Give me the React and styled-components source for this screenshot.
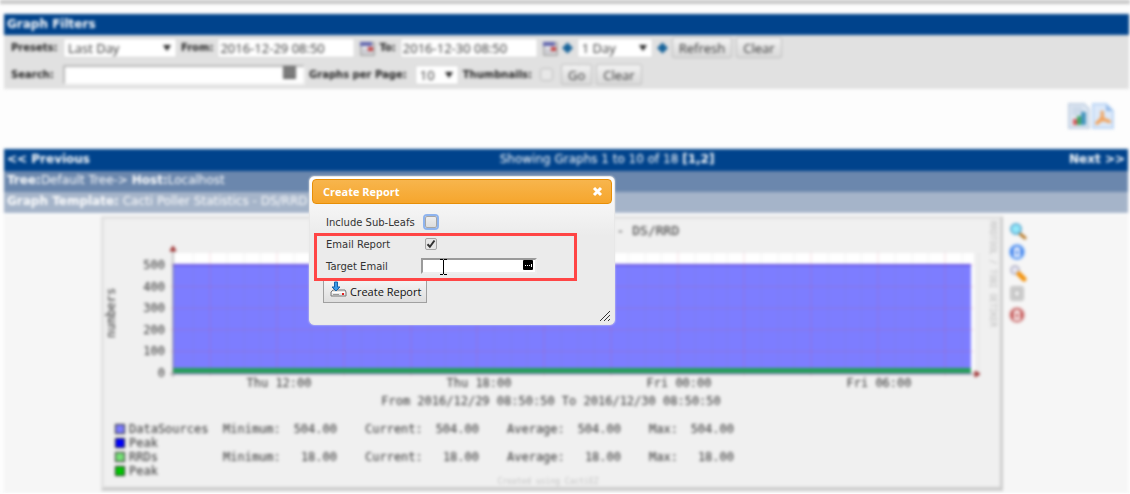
import React from "react";
import styled, { createGlobalStyle, css } from "styled-components";

const GlobalStyle = createGlobalStyle`
  * {
    box-sizing: border-box;
  }

  body {
    margin: 0;
    background: #fdfdfd;
    font-family: "DejaVu Sans", sans-serif;
    overflow: hidden;
  }
`;

const Screen = styled.div`
  position: relative;
`;

const Page = styled.main`
  filter: blur(1px) blur(1px);
  border-top: 4px solid #c5c5c5;
`;

const Filters = styled.section`
  margin: 10px 1px 0 4px;
  background: #e1e1e1;
`;

const FiltersTitle = styled.h2`
  margin: 0;
  padding: 0 3px;
  height: 21px;
  line-height: 21px;
  background: #00438c;
  color: #fff;
  font-size: 12px;
`;

const FilterForm = styled.form`
  display: flex;
  flex-direction: column;
  gap: 6px;
  padding: 2px 7px 4px;
`;

const FilterRow = styled.div`
  display: flex;
  align-items: center;
  height: 21px;
  gap: 4px;
`;

const FilterLabel = styled.label`
  display: flex;
  align-items: center;
  gap: ${({ $gap }) => $gap || 4}px;
  font-size: 10px;
  font-weight: 700;
  white-space: nowrap;
  color: #222;

  > span:first-child {
    min-width: ${({ $wide }) => ($wide ? "48px" : "0")};
  }
`;

const field = css`
  height: 20px;
  padding: 0 2px;
  border: 1px solid #d2d2d2;
  border-radius: 2px;
  background: #fff;
  color: #333;
  font-family: "Open Sans", sans-serif;
  font-size: 13px;
`;

const Field = styled.input`
  ${field}
  width: ${({ $width }) => $width}px;
`;

const SearchField = styled(Field)`
  border: 2px solid #b8b8b8;
  border-right-color: #f2f2f2;
  border-bottom-color: #f2f2f2;
`;

const SearchBox = styled.span`
  display: flex;
  position: relative;

  svg {
    position: absolute;
    top: 0;
    right: 8px;
  }
`;

const SelectBox = styled.span`
  display: flex;
  position: relative;

  &::after {
    content: "";
    position: absolute;
    top: 7px;
    right: 6px;
    border: 4px solid transparent;
    border-top: 6px solid #222;
    border-bottom: 0;
  }
`;

const Select = styled.select`
  ${field}
  appearance: none;
  padding-left: 4px;
  width: ${({ $width }) => $width}px;
`;

const Button = styled.button`
  height: 21px;
  padding: 0 6px;
  border: 1px solid #bdbdbd;
  border-radius: 2px;
  background: linear-gradient(#f2f2f2, #dadada);
  color: #333;
  font-family: "Open Sans", sans-serif;
  font-size: 13px;
  line-height: 18px;
`;

const Thumbnails = styled.input`
  appearance: none;
  width: 13px;
  height: 13px;
  margin: 0 4px;
  border: 1px solid #bcbcbc;
  border-radius: 3px;
  background: #e8e8e8;
`;

const Exports = styled.div`
  display: flex;
  justify-content: flex-end;
  gap: 2px;
  padding: 14px 16px 20px;
`;

const Graphs = styled.section`
  margin: 0 2px 0 4px;
  background: #f6f6f6;
`;

const Pager = styled.nav`
  display: grid;
  grid-template-columns: 6fr auto 5fr;
  height: 22px;
  padding: 0 3px;
  background: #00438c;
  color: #fff;
  font-size: 12px;
  line-height: 21px;

  a {
    color: inherit;
    font-weight: 700;
    text-decoration: none;
  }

  > :last-child {
    text-align: right;
  }
`;

const Crumb = styled.div`
  height: 21px;
  padding: 0 3px;
  background: ${({ $light }) => ($light ? "#a5b4c9" : "#6b87ad")};
  color: #fff;
  font-size: 12px;
  line-height: 19px;
`;

const GraphRow = styled.div`
  display: flex;
  align-items: flex-start;
  justify-content: center;
  gap: 6px;
  padding: 1px 4px 2px 0;
  border-top: 2px solid #fff;
`;

const Graph = styled.figure`
  width: 80%;
  min-width: 902px;
  margin: 0;
  border: 3px solid #e1e1e1;
  border-right-color: #cdcdcd;
  border-bottom: 4px solid #cdcdcd;
  background: #f0f0f0;
  font-family: "DejaVu Sans Mono", monospace;
  font-size: 12px;
  color: #333;

  svg {
    display: block;
  }
`;

const Legend = styled.table`
  margin-left: 11px;
  border-collapse: collapse;
  line-height: 14px;

  th,
  td {
    padding: 0;
    font-weight: 400;
    text-align: left;
    white-space: nowrap;
  }
`;

const NameCell = styled.th`
  width: 108px;
`;

const StatCell = styled.td`
  width: ${({ $narrow }) => ($narrow ? 35 : 64)}px;
`;

const ValueCell = styled.td`
  width: 78px;

  && {
    text-align: right;
    padding-right: 28px;
  }
`;

const Swatch = styled.span`
  display: inline-block;
  width: 10px;
  height: 10px;
  margin-right: 4px;
  border: 1px solid #222;
  background: ${({ $color }) => $color};
  vertical-align: -1px;
`;

const Credit = styled.figcaption`
  height: 9px;
  padding-right: 8px;
  color: #c4c4c4;
  font-size: 8px;
  line-height: 8px;
  text-align: center;
`;

const Tools = styled.div`
  display: flex;
  flex-direction: column;
  gap: 3px;
  padding-top: 6px;

  svg {
    display: block;
  }
`;

const Dialog = styled.section`
  position: absolute;
  top: 176px;
  left: 309px;
  width: 306px;
  height: 149px;
  padding: 2px;
  border: 1px solid #e8e8e8;
  border-radius: 5px;
  background: linear-gradient(#fff, #ebebeb 40%);
  box-shadow: 0 0 2px #e8e8e8;
`;

const DialogHeader = styled.header`
  display: flex;
  align-items: center;
  justify-content: space-between;
  height: 25px;
  padding: 0 8px 0 10px;
  border: 1px solid #e78f08;
  border-radius: 4px;
  background: linear-gradient(#f7b54d, #f6a62d);
  color: #fff;
`;

const DialogTitle = styled.h1`
  margin: 0;
  font-family: "Open Sans", sans-serif;
  font-size: 11px;
  font-weight: 700;
`;

const CloseButton = styled.button`
  display: flex;
  padding: 0;
  border: 0;
  background: none;
`;

const ReportForm = styled.form`
  padding: 7px 11px 0;
`;

const FormRow = styled.div`
  display: grid;
  grid-template-columns: 95px auto;
  align-items: center;
  justify-content: start;
  height: 22px;
  padding-left: 3px;
  color: #333;
  font-size: 10px;
`;

const Highlighted = styled.div`
  position: relative;

  &::after {
    content: "";
    position: absolute;
    z-index: 1;
    top: 0;
    left: -9px;
    width: 257px;
    height: 42px;
    border: 3px solid #ff4545;
    pointer-events: none;
  }
`;

const CheckBox = styled.input`
  appearance: none;
  width: 12px;
  height: 12px;
  margin: 0 0 0 4px;
  border: 1px solid #a6a6a6;
  border-radius: 2px;
  background: linear-gradient(#eee, #ddd);
  outline: ${({ $focused }) => ($focused ? "2px solid #8fb4ee" : "0")};

  &:checked {
    background: url("data:image/svg+xml,%3Csvg xmlns='http://www.w3.org/2000/svg' viewBox='0 0 10 10'%3E%3Cpath d='M1.5 5.2l2.4 2.6L8.5 1.5' fill='none' stroke='%23333' stroke-width='2'/%3E%3C/svg%3E")
      #e6e6e6;
  }
`;

const EmailBox = styled.span`
  display: flex;
  position: relative;

  svg {
    position: absolute;
    top: 1px;
    left: 19px;
  }

  svg + svg {
    top: 2px;
    left: 102px;
  }
`;

const EmailInput = styled.input`
  width: 116px;
  height: 16px;
  padding: 0 20px 0 4px;
  border: 2px solid #9a9a9a;
  border-right-color: #eee;
  border-bottom-color: #eee;
  background: #fff;
  font-size: 10px;
`;

const SubmitButton = styled.button`
  display: flex;
  align-items: center;
  gap: 2px;
  height: 25px;
  margin-top: 1px;
  padding: 0 5px 0 6px;
  border: 1px solid #a0a0a0;
  background: linear-gradient(#f6f6f6, #dedede);
  color: #111;
  font-family: "Open Sans", sans-serif;
  font-size: 11px;

  svg {
    margin-bottom: 4px;
  }

  span {
    padding-top: 2px;
  }
`;

const Grip = styled.svg`
  position: absolute;
  right: 3px;
  bottom: 2px;
`;

const CalendarIcon = () => (
  <svg width="16" height="16" viewBox="0 0 16 16" aria-hidden="true">
    <rect x="2" y="3" width="13" height="12" fill="#f4f4f4" stroke="#777" />
    <rect x="1" y="2" width="12" height="4" fill="#5d62ac" />
    <path d="M5 8v6M8 8v6M11 8v6M2 10h12M2 12h12" stroke="#b9b9c4" />
    <rect x="9" y="7" width="5" height="4" fill="#c64040" />
  </svg>
);

const DiamondIcon = () => (
  <svg width="11" height="12" viewBox="0 0 11 12" aria-hidden="true">
    <path d="M5.5 0.5L11 6l-5.500 5.500L0 6z" fill="#17639a" />
  </svg>
);

const KeypadIcon = () => (
  <svg width="15" height="15" viewBox="0 0 15 15" aria-hidden="true">
    <path d="M1 1h13v13H1z" fill="#6c6c6c" />
    <path d="M2 4h11M2 7h11M2 10h11" stroke="#999" />
  </svg>
);

const ReportIcon = () => (
  <svg width="22" height="26" viewBox="0 0 22 26" aria-hidden="true">
    <path d="M1 1h15l5 5v19H1z" fill="#dfe8f3" stroke="#c2d0e2" strokeWidth="2" />
    <path d="M4 5h10M4 8h12M4 11h7" stroke="#a9bdd6" />
    <path d="M5 16h4v6H5z" fill="#d9575b" />
    <path d="M9 13h4v9H9z" fill="#42a862" />
    <path d="M13 9h5v13h-5z" fill="#4595bd" />
  </svg>
);

const PdfIcon = () => (
  <svg width="22" height="26" viewBox="0 0 22 26" aria-hidden="true">
    <path d="M1 1h13l7 7v17H1z" fill="#dce9fa" stroke="#bcd6f5" strokeWidth="2" />
    <path d="M14 1v7h7z" fill="#93b9e8" />
    <path
      d="M10 8c3 0 0 5 2 7s6 1 7 4c-2 2-6-2-9-1s-4 5-6 3 4-4 5-7-1-6 1-6z"
      fill="#f5a45c"
      stroke="#f09c50"
    />
  </svg>
);

const ZoomIcon = () => (
  <svg width="18" height="18" viewBox="0 0 18 18" aria-hidden="true">
    <path d="M10 11l6 5" stroke="#b87c2c" strokeWidth="3" strokeLinecap="round" />
    <circle cx="7" cy="7" r="5" fill="#92e8fa" stroke="#62aed4" strokeWidth="2" />
  </svg>
);

const RoundIcon = ({ color, light }) => (
  <svg width="18" height="18" viewBox="0 0 18 18" aria-hidden="true">
    <circle cx="8" cy="9" r="7" fill={color} stroke={light} strokeWidth="2" />
    <path d="M6 6h4v7H6zM8 4v2" fill="none" stroke="#fff" strokeWidth="2" />
  </svg>
);

const WrenchIcon = () => (
  <svg width="18" height="18" viewBox="0 0 18 18" aria-hidden="true">
    <circle cx="6" cy="6" r="4" fill="#e7e7f3" stroke="#b9b9cc" strokeWidth="2" />
    <path d="M10 10l5 5" stroke="#f39410" strokeWidth="5" strokeLinecap="round" />
  </svg>
);

const PageIcon = () => (
  <svg width="18" height="18" viewBox="0 0 18 18" aria-hidden="true">
    <rect x="2" y="2" width="12" height="13" rx="2" fill="#ddd" stroke="#c4c4c4" strokeWidth="2" />
    <rect x="5" y="5" width="6" height="7" fill="#eee" stroke="#999" />
  </svg>
);

const yTicks = [0, 100, 200, 300, 400, 500];
const xTicks = ["Thu 12:00", "Thu 18:00", "Fri 00:00", "Fri 06:00"];
const majorLines = [37, 104, 171, 238, 304, 371, 438, 505, 571, 638, 705, 772];

const legend = [
  { name: "DataSources", color: "#7d7dff", value: "504.00" },
  { name: "Peak", color: "#0000ff" },
  { name: "RRDs", color: "#77e077", value: "18.00" },
  { name: "Peak", color: "#00c800" },
];

const Chart = () => (
  <svg width="100%" height="203" viewBox="0 0 896 203" role="img" aria-label="Poller statistics">
    <g fill="#333">
      <text x="450" y="16" fontSize="13" textAnchor="middle">
        Cacti Poller Statistics - DS/RRD
      </text>
      <text transform="translate(11 94) rotate(-90)" textAnchor="middle">
        numbers
      </text>
      {yTicks.map((tick) => (
        <text key={tick} x="61" y={158 - tick * 0.216} textAnchor="end">
          {tick}
        </text>
      ))}
      {xTicks.map((tick, i) => (
        <text key={tick} x={175 + i * 200} y="168" textAnchor="middle">
          {tick}
        </text>
      ))}
      <text x="447" y="186" textAnchor="middle">
        From 2016/12/29 08:50:50 To 2016/12/30 08:50:50
      </text>
    </g>
    <text transform="translate(886 2) rotate(90)" fontSize="8" fill="#bbb">
      RRDTOOL / TOBI OETIKER
    </text>
    <rect x="69" y="34" width="801" height="121" fill="#fff" />
    <rect x="69" y="45" width="798" height="110" fill="#7d7dff" />
    <rect x="69" y="45" width="798" height="2" fill="#5a50f0" />
    {majorLines.map((x) => (
      <g key={x}>
        <path d={`M${x + 69} 33V157`} stroke="#d05070" opacity="0.2" />
        <path d={`M${x + 86} 34V155M${x + 103} 34V155M${x + 52} 34V155`} stroke="#888" opacity="0.12" />
      </g>
    ))}
    {yTicks.map((tick) => (
      <path key={tick} d={`M66 ${154 - tick * 0.216}H870`} stroke="#d05070" opacity="0.2" />
    ))}
    <rect x="69" y="149" width="798" height="5" fill="#22a055" />
    <path d="M69 30V158M66 155H873" stroke="#555" opacity="0.6" />
    <path d="M69 27l3 5h-6zM876 155l-5-3v6z" fill="#a03535" stroke="#a03535" />
  </svg>
);

const GraphLegend = () => (
  <Legend>
    <tbody>
      {legend.map(({ name, color, value }) => (
        <tr key={color}>
          <NameCell scope="row">
            <Swatch $color={color} />
            {name}
          </NameCell>
          {value && (
            <>
              <StatCell>Minimum:</StatCell>
              <ValueCell>{value}</ValueCell>
              <StatCell>Current:</StatCell>
              <ValueCell>{value}</ValueCell>
              <StatCell>Average:</StatCell>
              <ValueCell>{value}</ValueCell>
              <StatCell $narrow>Max:</StatCell>
              <ValueCell>{value}</ValueCell>
            </>
          )}
        </tr>
      ))}
    </tbody>
  </Legend>
);

const FilterPanel = () => (
  <Filters>
    <FiltersTitle>Graph Filters</FiltersTitle>
    <FilterForm>
      <FilterRow>
        <FilterLabel $wide>
          <span>Presets:</span>
          <SelectBox>
            <Select $width={114} defaultValue="Last Day">
              <option>Last Day</option>
            </Select>
          </SelectBox>
        </FilterLabel>
        <FilterLabel>
          <span>From:</span>
          <Field $width={138} defaultValue="2016-12-29 08:50" />
        </FilterLabel>
        <CalendarIcon />
        <FilterLabel>
          <span>To:</span>
          <Field $width={138} defaultValue="2016-12-30 08:50" />
        </FilterLabel>
        <CalendarIcon />
        <DiamondIcon />
        <SelectBox>
          <Select $width={76} aria-label="Timespan" defaultValue="1 Day">
            <option>1 Day</option>
          </Select>
        </SelectBox>
        <DiamondIcon />
        <Button type="button">Refresh</Button>
        <Button type="button">Clear</Button>
      </FilterRow>
      <FilterRow>
        <FilterLabel $wide>
          <span>Search:</span>
          <SearchBox>
            <SearchField $width={242} />
            <KeypadIcon />
          </SearchBox>
        </FilterLabel>
        <FilterLabel $gap={8}>
          <span>Graphs per Page:</span>
          <SelectBox>
            <Select $width={44} defaultValue="10">
              <option>10</option>
            </Select>
          </SelectBox>
        </FilterLabel>
        <FilterLabel>
          <span>Thumbnails:</span>
          <Thumbnails type="checkbox" />
        </FilterLabel>
        <Button type="button">Go</Button>
        <Button type="button">Clear</Button>
      </FilterRow>
    </FilterForm>
  </Filters>
);

const ReportDialog = () => (
  <Dialog role="dialog" aria-labelledby="report-title">
    <DialogHeader>
      <DialogTitle id="report-title">Create Report</DialogTitle>
      <CloseButton type="button" aria-label="Close">
        <svg width="11" height="11" viewBox="0 0 11 11">
          <path d="M2 2l7 7M9 2l-7 7" stroke="#fff" strokeWidth="3" />
        </svg>
      </CloseButton>
    </DialogHeader>
    <ReportForm>
      <FormRow>
        <label htmlFor="sub-leafs">Include Sub-Leafs</label>
        <CheckBox id="sub-leafs" type="checkbox" $focused />
      </FormRow>
      <Highlighted>
        <FormRow>
          <label htmlFor="email-report">Email Report</label>
          <CheckBox id="email-report" type="checkbox" defaultChecked />
        </FormRow>
        <FormRow>
          <label htmlFor="target-email">Target Email</label>
          <EmailBox>
            <EmailInput id="target-email" />
            <svg width="7" height="16" viewBox="0 0 7 16" aria-hidden="true">
              <path d="M0 .5h3M4 .5h3M3.500 1v14M0 15.500h3M4 15.500h3" stroke="#000" />
            </svg>
            <svg width="10" height="10" viewBox="0 0 10 10" aria-hidden="true">
              <rect width="10" height="10" rx="1" fill="#000" />
              <path d="M2 5.500h1M4 5.500h1M6 5.500h1M8.500 4v3" stroke="#fff" />
            </svg>
          </EmailBox>
        </FormRow>
      </Highlighted>
      <SubmitButton type="button">
        <svg width="18" height="18" viewBox="0 0 18 18" aria-hidden="true">
          <path d="M3 10h12l1 2v4H1v-4z" fill="#e8e8e8" stroke="#777" />
          <path d="M2 12.500h13" stroke="#fff" />
          <path d="M3 14.500h6" stroke="#999" />
          <path d="M12 14h2" stroke="#e02020" strokeWidth="2" />
          <path d="M4.500 2h3v5h2.500l-4 4-4-4h2.500z" fill="#3b9be8" stroke="#1763a8" />
        </svg>
        <span>Create Report</span>
      </SubmitButton>
    </ReportForm>
    <Grip width="12" height="12" viewBox="0 0 12 12" aria-hidden="true">
      <path d="M1 11L11 1M5 11l6-6M9 11l2-2" stroke="#333" />
    </Grip>
  </Dialog>
);

export default function App() {
  return (
    <Screen>
      <GlobalStyle />
      <Page>
        <FilterPanel />
        <Exports>
          <ReportIcon />
          <PdfIcon />
        </Exports>
        <Graphs>
          <Pager>
            <span>
              <a href="#previous">&lt;&lt; Previous</a>
            </span>
            <span>
              Showing Graphs 1 to 10 of 18 <b>[1,2]</b>
            </span>
            <span>
              <a href="#next">Next &gt;&gt;</a>
            </span>
          </Pager>
          <Crumb>
            <b>Tree:</b>Default Tree-&gt; <b>Host:</b>Localhost
          </Crumb>
          <Crumb $light>
            <b>Graph Template:</b> Cacti Poller Statistics - DS/RRD
          </Crumb>
          <GraphRow>
            <Graph>
              <Chart />
              <GraphLegend />
              <Credit>Created using CactiEZ</Credit>
            </Graph>
            <Tools>
              <ZoomIcon />
              <RoundIcon color="#3d7eea" light="#7db0f7" />
              <WrenchIcon />
              <PageIcon />
              <RoundIcon color="#c25050" light="#dba0a0" />
            </Tools>
          </GraphRow>
        </Graphs>
      </Page>
      <ReportDialog />
    </Screen>
  );
}
